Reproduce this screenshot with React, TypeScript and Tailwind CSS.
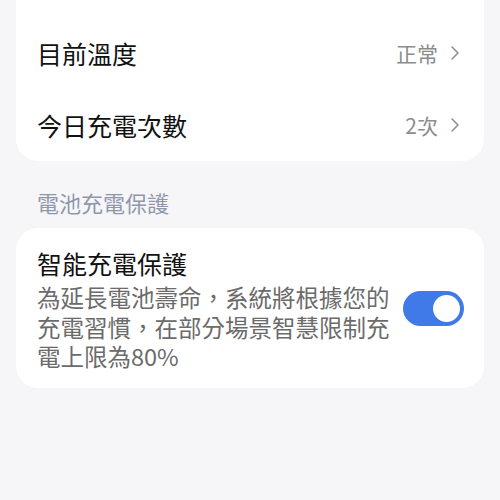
import { ChevronRight } from 'lucide-react';

const font = { fontFamily: '"Noto Sans CJK TC", "Noto Sans", sans-serif' };

function InfoRow({ label, value }: { label: string; value: string }) {
  return (
    <div className="flex h-[72px] items-center justify-between pl-[21px] pr-[17px]">
      <span className="text-[25px] leading-none text-[#111111]">{label}</span>
      <div className="flex items-center gap-[5px] text-[#8c8c8c]">
        <span className="text-[21px] leading-none">{value}</span>
        <ChevronRight size={24} strokeWidth={1.5} />
      </div>
    </div>
  );
}

function Toggle() {
  return (
    <div className="flex h-[35px] w-[61px] shrink-0 items-center justify-end rounded-full bg-[#3f7ae8] pr-[4px]">
      <div className="h-[27px] w-[27px] rounded-full bg-white" />
    </div>
  );
}

export default function App() {
  return (
    <div className="h-[500px] w-[500px] overflow-hidden bg-[#f6f6f8]" style={font}>
      <div className="mx-[16px] rounded-b-[22px] bg-white pt-[17px]">
        <InfoRow label="目前溫度" value="正常" />
        <InfoRow label="今日充電次數" value="2次" />
      </div>

      {/* 電池充電保護 */}
      <div className="px-[37px] pt-[28px] pb-[13px] text-[22px] leading-[26px] text-[#9096ac]">
        電池充電保護
      </div>

      <div className="mx-[16px] flex items-center justify-between rounded-[22px] bg-white pt-[17px] pb-[16px] pl-[21px] pr-[20px]">
        <div className="w-[362px]">
          <div className="text-[25px] leading-[36px] text-[#111111]">智能充電保護</div>
          <p className="mt-[2px] text-[23.5px] leading-[29.5px] text-[#6b6b6b]">
            為延長電池壽命，系統將根據您的充電習慣，在部分場景智慧限制充電上限為80%
          </p>
        </div>
        <Toggle />
      </div>
    </div>
  );
}
